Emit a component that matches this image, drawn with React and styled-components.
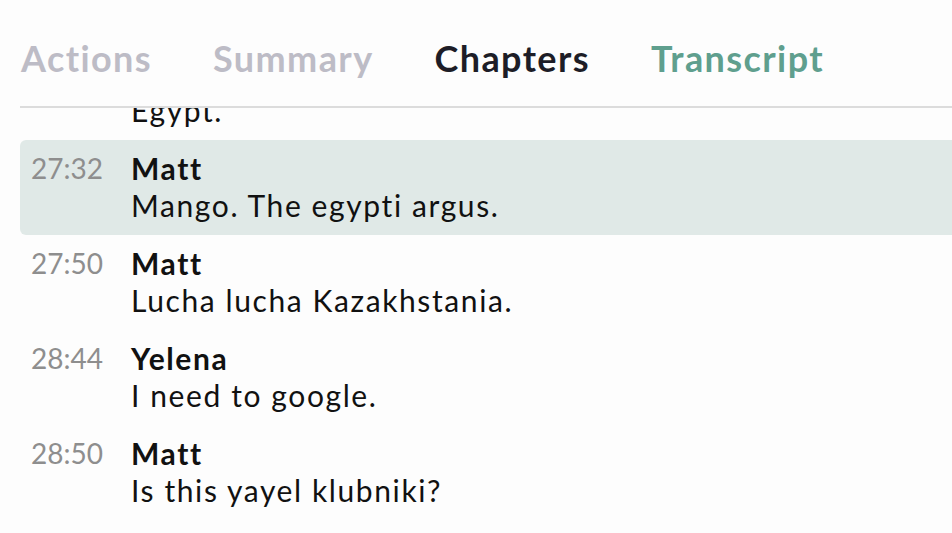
import React from 'react';
import styled, { createGlobalStyle } from 'styled-components';

const GlobalStyle = createGlobalStyle`
    html, body {
        margin: 0;
        padding: 0;
        background: #fdfdfd;
        font-family: Lato, "Open Sans", sans-serif;
    }
`;

const Page = styled.div`
    width: 952px;
    height: 533px;
    overflow: hidden;
    display: flex;
    flex-direction: column;
`;

const TabBar = styled.div`
    display: flex;
    align-items: flex-end;
    gap: 61px;
    height: 108px;
    margin-left: 20px;
    padding-left: 1px;
    border-bottom: 2px solid #dcdcdc;
    box-sizing: border-box;
    flex-shrink: 0;
`;

const Tab = styled.div`
    font-size: 36px;
    font-weight: 700;
    letter-spacing: 1.4px;
    line-height: 1.2;
    padding-bottom: 26px;
    color: ${(p) => p.color};
`;

const Scroller = styled.div`
    flex: 1;
    overflow: hidden;
    padding-left: 20px;
`;

const List = styled.div`
    margin-top: -63px;
`;

const Row = styled.div`
    display: grid;
    grid-template-columns: 89px 1fr;
    column-gap: 11px;
    height: 95px;
    box-sizing: border-box;
    padding: 10px 0 0 11px;
    border-radius: 6px 0 0 6px;
    background: ${(p) => (p.active ? '#e0e9e7' : 'transparent')};
`;

const Time = styled.div`
    font-size: 28px;
    font-weight: 400;
    color: #8e8e8e;
    line-height: 37px;
`;

const Body = styled.div`
    font-size: 30px;
    letter-spacing: 1.6px;
    line-height: 37px;
    color: #111;
`;

const Speaker = styled.div`
    font-weight: 700;
`;

const tabs = [
    { label: 'Actions', color: '#bdbcc6' },
    { label: 'Summary', color: '#bdbcc6' },
    { label: 'Chapters', color: '#1d1d27' },
    { label: 'Transcript', color: '#5f9f8e' },
];

const lines = [
    { time: '27:20', speaker: 'Yelena', text: 'Egypt.' },
    { time: '27:32', speaker: 'Matt', text: 'Mango. The egypti argus.', active: true },
    { time: '27:50', speaker: 'Matt', text: 'Lucha lucha Kazakhstania.' },
    { time: '28:44', speaker: 'Yelena', text: 'I need to google.' },
    { time: '28:50', speaker: 'Matt', text: 'Is this yayel klubniki?' },
];

export default function App() {
    return (
        <Page>
            <GlobalStyle />
            <TabBar>
                {tabs.map((t) => (
                    <Tab key={t.label} color={t.color}>{t.label}</Tab>
                ))}
            </TabBar>
            <Scroller>
                <List>
                    {lines.map((l, i) => (
                        <Row key={i} active={l.active}>
                            <Time>{l.time}</Time>
                            <Body>
                                <Speaker>{l.speaker}</Speaker>
                                {l.text}
                            </Body>
                        </Row>
                    ))}
                </List>
            </Scroller>
        </Page>
    );
}
